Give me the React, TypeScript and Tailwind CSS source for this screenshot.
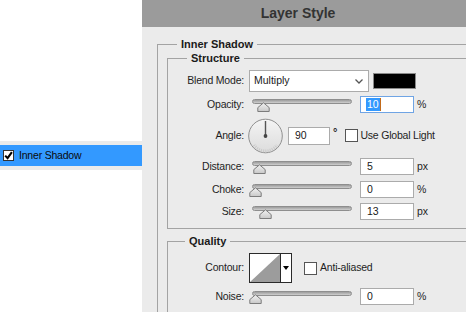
import React from "react";

const txt = "text-[10.5px] tracking-[-0.2px] text-[#1e1e1e]";

function Thumb({ left }: { left: number }) {
  return (
    <svg
      className="absolute top-[6px]"
      style={{ left }}
      width="13"
      height="10"
      viewBox="0 0 13 10"
    >
      <defs>
        <linearGradient id="thumbFill" x1="0" y1="0" x2="0" y2="1">
          <stop offset="0" stopColor="#f2f2f2" />
          <stop offset="1" stopColor="#c8c8c8" />
        </linearGradient>
      </defs>
      <path
        d="M6.5 0.8 L12.2 5.6 V9.5 H0.8 V5.6 Z"
        fill="url(#thumbFill)"
        stroke="#7c7c7c"
        strokeLinejoin="round"
      />
    </svg>
  );
}

function Slider({ thumb }: { thumb: number }) {
  return (
    <div className="relative h-[17px] w-[104px] shrink-0">
      <div className="absolute left-[3px] top-[3px] h-[5px] w-[100px] rounded-full border border-[#8e8e8e] bg-gradient-to-b from-[#9c9c9c] to-[#cfcfcf]" />
      <Thumb left={thumb} />
    </div>
  );
}

function NumBox({ value, focused }: { value: string; focused?: boolean }) {
  return (
    <div
      className={
        focused
          ? "flex h-[17px] w-[54px] shrink-0 items-center border border-[#6fa4e4] bg-white pl-[5px] text-[10.5px] text-[#1a1a1a]"
          : "flex h-[17px] w-[54px] shrink-0 items-center border border-[#ababab] bg-white pl-[6px] text-[10.5px] text-[#1a1a1a]"
      }
    >
      {focused ? (
        <span className="flex items-center">
          <span className="bg-[#3399ff] px-[1px] leading-[13px] text-white">{value}</span>
          <span className="h-[13px] w-px bg-[#c26a1a]" />
        </span>
      ) : (
        value
      )}
    </div>
  );
}

function Label({ children }: { children: React.ReactNode }) {
  return <div className={"w-[76px] shrink-0 text-right " + txt}>{children}</div>;
}

function SliderRow({
  label,
  thumb,
  value,
  unit,
  focused,
  className,
}: {
  label: string;
  thumb: number;
  value: string;
  unit: string;
  focused?: boolean;
  className: string;
}) {
  return (
    <div className={"flex h-[17px] items-center " + className}>
      <Label>{label}</Label>
      <div className="ml-[5px] flex items-center">
        <Slider thumb={thumb} />
        <div className="ml-[7px]">
          <NumBox value={value} focused={focused} />
        </div>
        <span className={"ml-[3px] " + txt}>{unit}</span>
      </div>
    </div>
  );
}

function Dial() {
  return (
    <svg width="35" height="36" viewBox="0 0 35 36">
      <defs>
        <linearGradient id="dialFill" x1="0" y1="0" x2="0" y2="1">
          <stop offset="0" stopColor="#f4f4f4" />
          <stop offset="1" stopColor="#dcdcdc" />
        </linearGradient>
      </defs>
      <circle cx="17.5" cy="18" r="16.8" fill="url(#dialFill)" stroke="#8f8f8f" />
      <path
        d="M6 27 A14 14 0 0 0 29 27"
        fill="none"
        stroke="#c9c9c9"
        strokeWidth="3"
        strokeDasharray="1 1.2"
      />
      <line x1="17.5" y1="3" x2="17.5" y2="18" stroke="#555" strokeWidth="1.4" />
      <circle cx="17.5" cy="18" r="1.9" fill="#444" />
    </svg>
  );
}

function Check() {
  return <div className="h-[13px] w-[13px] shrink-0 border border-[#555] bg-white" />;
}

export default function App() {
  return (
    <div className="flex h-[312px] w-[466px] overflow-hidden bg-[#ebebeb] font-['Liberation_Sans',Arial,sans-serif]">
      {/* layer list */}
      <div className="flex w-[142px] shrink-0 flex-col">
        <div className="h-[141px] bg-white" />
        <div className="mt-[4px] flex h-[21px] items-center bg-[#3399ff] pl-[3px]">
          <div className="flex h-[11px] w-[11px] items-center justify-center border border-[#333] bg-white">
            <svg width="9" height="9" viewBox="0 0 9 9">
              <path d="M1.2 4.6 L3.6 7.2 L7.9 1.2" fill="none" stroke="#000" strokeWidth="2.1" />
            </svg>
          </div>
          <span className="ml-[5px] text-[10.5px] tracking-[-0.2px] text-[#0a0a0a]">Inner Shadow</span>
        </div>
        <div className="mt-[4px] flex-1 bg-white" />
      </div>

      {/* dialog */}
      <div className="flex min-w-0 flex-1 flex-col overflow-hidden">
        <div className="flex h-[27px] shrink-0 items-center justify-center bg-[#9b9b9b] pr-[12px] text-[14px] font-bold text-[#333]">
          Layer Style
        </div>

        <fieldset className="ml-[15px] mt-[10px] w-[340px] shrink-0 border border-[#a3a3a3] pl-[9px]">
          <legend className="ml-[10px] px-[4px] text-[11px] font-bold leading-[14px] text-[#1a1a1a]">
            Inner Shadow
          </legend>

          <fieldset className="w-[340px] border border-[#a3a3a3]">
            <legend className="ml-[19px] px-[4px] text-[11px] font-bold leading-[14px] text-[#1a1a1a]">
              Structure
            </legend>
            <div className="pb-[8px] pt-[5px]">
              {/* blend mode */}
              <div className="flex h-[22px] items-center">
                <Label>Blend Mode:</Label>
                <div className="ml-[5px] flex h-[22px] w-[120px] items-center justify-between border border-[#ababab] bg-white pl-[4px] pr-[5px] text-[10.5px] text-[#1a1a1a]">
                  <span>Multiply</span>
                  <svg width="8" height="5" viewBox="0 0 8 5">
                    <path d="M0.5 0.5 L4 4 L7.5 0.5" fill="none" stroke="#555" strokeWidth="1.3" />
                  </svg>
                </div>
                <div className="ml-[4px] h-[16px] w-[43px] border border-[#8a8a8a] bg-black" />
              </div>

              <SliderRow className="mt-[4px]" label="Opacity:" thumb={8} value="10" unit="%" focused />

              {/* angle */}
              <div className="mt-[5px] flex h-[35px] items-center">
                <Label>Angle:</Label>
                <div className="ml-[4px] flex items-center">
                  <Dial />
                  <div className="ml-[5px] flex h-[18px] w-[42px] items-center border border-[#ababab] bg-white pl-[6px] text-[10.5px] text-[#1a1a1a]">
                    90
                  </div>
                  <span className="-mt-[6px] ml-[3px] text-[11px] font-bold text-[#1e1e1e]">°</span>
                  <div className="ml-[8px]">
                    <Check />
                  </div>
                  <span className={"ml-[2px] " + txt}>Use Global Light</span>
                </div>
              </div>

              <SliderRow className="mt-[5px]" label="Distance:" thumb={4} value="5" unit="px" />
              <SliderRow className="mt-[6px]" label="Choke:" thumb={0} value="0" unit="%" />
              <SliderRow className="mt-[5px]" label="Size:" thumb={10} value="13" unit="px" />
            </div>
          </fieldset>

          <fieldset className="mt-[5px] w-[340px] border border-[#a3a3a3]">
            <legend className="ml-[17px] px-[4px] text-[11px] font-bold leading-[14px] text-[#1a1a1a]">
              Quality
            </legend>
            <div className="pb-[10px] pt-[5px]">
              <div className="flex h-[30px] items-center">
                <Label>Contour:</Label>
                <div className="ml-[5px] flex h-[30px] w-[43px] border border-[#2a2a2a] bg-white">
                  <svg width="30" height="28" viewBox="0 0 30 28">
                    <rect x="0" y="0" width="30" height="28" fill="#fff" />
                    <path d="M0 28 L30 0 L30 28 Z" fill="#9c9c9c" />
                  </svg>
                  <div className="flex flex-1 items-center justify-center border-l border-[#2a2a2a]">
                    <svg width="6" height="4" viewBox="0 0 6 4">
                      <path d="M0 0 H6 L3 4 Z" fill="#000" />
                    </svg>
                  </div>
                </div>
                <div className="ml-[12px]">
                  <Check />
                </div>
                <span className={"ml-[3px] " + txt}>Anti-aliased</span>
              </div>
              <SliderRow className="mt-[5px]" label="Noise:" thumb={0} value="0" unit="%" />
            </div>
          </fieldset>
        </fieldset>
      </div>
    </div>
  );
}
